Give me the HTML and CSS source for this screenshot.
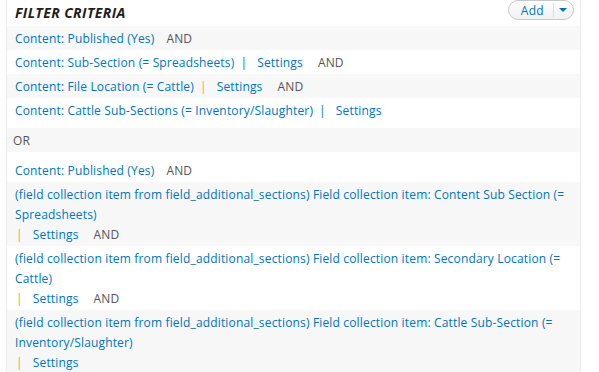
FILE: index.html
```html
<!DOCTYPE html>
<html>
<head>
<meta charset="utf-8">
<link rel="stylesheet" href="styles.css">
</head>
<body>
<div class="panel">
  <div class="header">
    <span class="title">FILTER CRITERIA</span>
    <span class="addbtn"><span class="add">Add</span><span class="sep"></span><span class="caret"></span></span>
  </div>
  <div class="group">
    <div class="row odd"><a>Content: Published (Yes)</a><span class="op">AND</span></div>
    <div class="row"><a>Content: Sub-Section (= Spreadsheets)</a><span class="pipe blue">|</span><a>Settings</a><span class="op wide">AND</span></div>
    <div class="row odd"><a>Content: File Location (= Cattle)</a><span class="pipe">|</span><a>Settings</a><span class="op wide">AND</span></div>
    <div class="row"><a>Content: Cattle Sub-Sections (= Inventory/Slaughter)</a><span class="pipe blue">|</span><a>Settings</a></div>
  </div>
  <div class="row odd or">OR</div>
  <div class="group second">
    <div class="row"><a>Content: Published (Yes)</a><span class="op">AND</span></div>
    <div class="row odd"><a>(field collection item from field_additional_sections) Field collection item: Content Sub Section (= Spreadsheets)</a><br><span class="pipe first">|</span><a>Settings</a><span class="op wide">AND</span></div>
    <div class="row"><a>(field collection item from field_additional_sections) Field collection item: Secondary Location (= Cattle)</a><br><span class="pipe first">|</span><a>Settings</a><span class="op wide">AND</span></div>
    <div class="row odd"><a>(field collection item from field_additional_sections) Field collection item: Cattle Sub-Section (= Inventory/Slaughter)</a><br><span class="pipe first">|</span><a>Settings</a></div>
  </div>
</div>
</body>
</html>
```

FILE: styles.css
```css
html, body {
  margin: 0;
  padding: 0;
  background: #fff;
}
body {
  font-family: "Open Sans", "DejaVu Sans", sans-serif;
  font-size: 12px;
  letter-spacing: 0.16px;
  color: #333;
}
.panel {
  margin-left: 6px;
  width: 573px;
  border-left: 1px solid #ececec;
  border-right: 1px solid #ececec;
}
.header {
  display: flex;
  justify-content: space-between;
  align-items: center;
  height: 26px;
  padding: 0 6px 0 8px;
}
.title {
  font-weight: bold;
  font-style: italic;
  font-size: 14px;
  letter-spacing: 0.4px;
  color: #1e1e1e;
  margin-top: -2px;
}
.addbtn {
  display: flex;
  align-items: center;
  height: 18px;
  border: 1px solid #c8c8c8;
  border-radius: 10px;
  background: linear-gradient(#fefefe, #f1f1f1);
  margin-top: -6px;
  padding: 0 6px 0 12px;
}
.add {
  color: #0074bd;
  font-size: 12px;
  letter-spacing: 0.3px;
}
.sep {
  width: 1px;
  height: 14px;
  background: #ddd;
  margin: 0 5px 0 9px;
}
.caret {
  width: 0;
  height: 0;
  border-left: 4px solid transparent;
  border-right: 4px solid transparent;
  border-top: 4px solid #0074bd;
}
.row {
  padding: 3px 8px 1px;
  line-height: 20px;
  background: #fff;
}
.row.odd {
  background: #f7f7f7;
}
.group {
  padding-bottom: 6px;
}
.group.second {
  padding-top: 6px;
  padding-bottom: 0;
}
a {
  color: #0074bd;
}
.pipe {
  color: #e8a040;
  margin: 0 10px 0 6px;
}
.pipe.blue {
  color: #0074bd;
}
.pipe.first {
  margin-left: 1px;
}
.op {
  color: #555;
  margin-left: 12px;
}
.op.wide {
  margin-left: 15px;
}
.or {
  color: #555;
  padding-left: 6px;
}
```
